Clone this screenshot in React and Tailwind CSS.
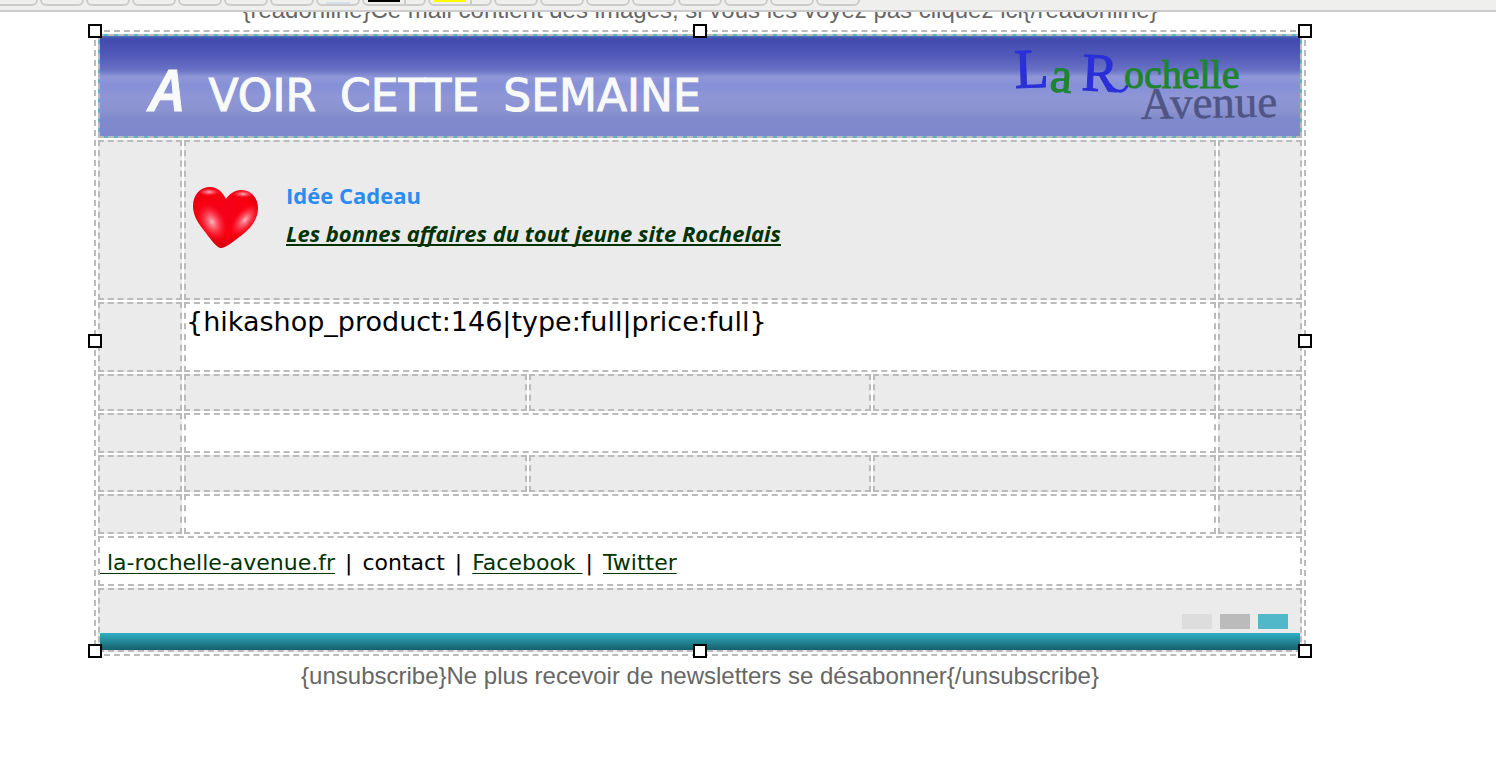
const toolbarButtons = ['bold', 'italic', 'underline', 'left', 'center', 'right', 'justify'];
const toolbarButtonsEnd = ['outdent', 'indent', 'link', 'unlink', 'anchor', 'image', 'table', 'source'];

const cell = 'border-2 border-dashed border-[#bbbbbb] p-0';
const grayCell = `${cell} bg-[#ebebeb]`;
const footerLink = 'text-[#003300] underline decoration-1 underline-offset-3';

function ToolbarButton({ label, children }) {
  return (
    <button
      type="button"
      aria-label={label}
      className="h-11 w-11 shrink-0 rounded-md border-2 border-[#cccccc] bg-[#efefed] flex items-end justify-center"
    >
      {children}
    </button>
  );
}

function ColorButton({ label, swatch }) {
  return (
    <div className="flex shrink-0 h-11 rounded-md border-2 border-[#cccccc] bg-[#efefed]">
      <button type="button" aria-label={label} className="w-10 px-1 pb-0.5 flex items-end">
        <span className={`block h-2 w-full ${swatch}`} />
      </button>
      <button type="button" aria-label={`${label} options`} className="w-5 border-l-2 border-[#cccccc]" />
    </div>
  );
}

// The editor is scrolled, only the bottom edge of the button row is visible
function Toolbar() {
  return (
    <header className="relative z-10 h-3 overflow-hidden border-b-2 border-[#cccccc] bg-[#efefed] flex items-end gap-0.5 pb-1">
      <div className="h-11 w-[38px] shrink-0 rounded-r-md border-2 border-l-0 border-[#cccccc]" />
      {toolbarButtons.map((name) => (
        <ToolbarButton key={name} label={name}>
          {name === 'justify' && <span className="block h-0.5 w-6 bg-[#d5e0ea]" />}
        </ToolbarButton>
      ))}
      <ColorButton label="Text color" swatch="bg-black" />
      <ColorButton label="Highlight color" swatch="bg-[#ffff00]" />
      {toolbarButtonsEnd.map((name) => (
        <ToolbarButton key={name} label={name} />
      ))}
    </header>
  );
}

function Logo() {
  return (
    <svg width="280" height="100" viewBox="0 -5 280 100" role="img" aria-label="La Rochelle Avenue" className="shrink-0 font-['Liberation_Serif',serif]">
      <g fill="#2a2fd8" stroke="#2a2fd8">
        <text x="3" y="47" fontSize="56" transform="rotate(-2 3 47)">L</text>
        <text x="69" y="49" fontSize="54" transform="rotate(3 69 49)">R</text>
        <path d="M98 44C103 52 112 52 115 45" fill="none" strokeWidth="3" strokeLinecap="round" />
      </g>
      <g fill="#1f8432" stroke="#1f8432">
        <text x="37" y="50" fontSize="50" transform="rotate(5 37 50)">a</text>
        <text x="112" y="47" fontSize="40">ochelle</text>
      </g>
      <text x="129" y="78" fontSize="45" fill="#4f5585" stroke="#4f5585" strokeWidth="0.5" transform="rotate(-1 129 78)">Avenue</text>
    </svg>
  );
}

function Heart() {
  return (
    <svg width="68" height="64" viewBox="0 0 68 64" aria-hidden="true" className="mt-2">
      <defs>
        <radialGradient id="heartBase" cx="0.5" cy="0.4" r="0.6">
          <stop offset="0" stopColor="#f5001c" />
          <stop offset="0.65" stopColor="#f8000f" />
          <stop offset="1" stopColor="#d40010" />
        </radialGradient>
        <radialGradient id="heartShine">
          <stop offset="0" stopColor="#ffb8c2" />
          <stop offset="1" stopColor="#ff3048" stopOpacity="0" />
        </radialGradient>
      </defs>
      <path
        d="M29 62C25 62 19 54 14 47C7 38 1 31 1 20C1 8 9 1 18 1C26 1 31 7 34 13C37 8 43 4 49 4C60 4 66 13 66 22C66 33 59 42 50 49C42 55 34 62 29 62Z"
        fill="url(#heartBase)"
      />
      <ellipse cx="20" cy="36" rx="13" ry="20" fill="url(#heartShine)" transform="rotate(-28 20 36)" />
      <ellipse cx="53" cy="34" rx="10" ry="19" fill="url(#heartShine)" transform="rotate(40 53 34)" />
      <ellipse cx="17" cy="6" rx="11" ry="4" fill="url(#heartShine)" />
      <ellipse cx="51" cy="8" rx="11" ry="4" fill="url(#heartShine)" />
    </svg>
  );
}

function Banner() {
  return (
    <div className="flex h-[100px] items-center justify-between bg-[linear-gradient(#4a74b8_0,#424bae_3px,#525aba_20px,#6972c4_34px,#8f97d8_41px,#8690d7_50px,#8f96d7_62px,#8a92cf_76px,#8089cb_82px,#7e87cb_100px)] pl-[50px] pr-2 text-[#f7faf8]">
      <h1 className="flex items-baseline gap-6 whitespace-nowrap pt-3 font-['Comic_Sans_MS','DejaVu_Sans',sans-serif] text-[44px] leading-[60px] [-webkit-text-stroke:1px_#f7faf8]">
        <span className="font-['Comic_Sans_MS','Open_Sans',sans-serif] text-[58px] font-semibold italic">A</span>
        <span>VOIR</span>
        <span>CETTE</span>
        <span>SEMAINE</span>
      </h1>
      <Logo />
    </div>
  );
}

function Handles() {
  const handle = 'absolute size-3.5 border-2 border-black bg-white -translate-x-1/2 -translate-y-1/2';
  return (
    <div className="pointer-events-none absolute inset-x-px top-px bottom-[5px]">
      <span className={`${handle} left-0 top-0`} />
      <span className={`${handle} left-1/2 top-0`} />
      <span className={`${handle} left-full top-0`} />
      <span className={`${handle} left-0 top-1/2`} />
      <span className={`${handle} left-full top-1/2`} />
      <span className={`${handle} left-0 top-full`} />
      <span className={`${handle} left-1/2 top-full`} />
      <span className={`${handle} left-full top-full`} />
    </div>
  );
}

function SplitRow() {
  return (
    <tr className="h-[37px]">
      <td className={grayCell} />
      <td className={grayCell} />
      <td className={grayCell} />
      <td className={grayCell} />
      <td className={grayCell} />
    </tr>
  );
}

function WideRow() {
  return (
    <tr className="h-10">
      <td className={grayCell} />
      <td className={cell} colSpan={3} />
      <td className={grayCell} />
    </tr>
  );
}

function Newsletter() {
  return (
    <table className="w-full table-fixed border-separate border-spacing-[2px] border-2 border-dashed border-[#bbbbbb] bg-white font-['Verdana','DejaVu_Sans',sans-serif] text-black">
      <colgroup>
        <col className="w-[84px]" />
        <col />
        <col />
        <col />
        <col className="w-[84px]" />
      </colgroup>
      <tbody>
        <tr>
          <td className={`${cell} bg-[#5fb4c2]`} colSpan={5}>
            <Banner />
          </td>
        </tr>
        <tr className="h-40">
          <td className={grayCell} />
          <td className={grayCell} colSpan={3}>
            <div className="flex items-center gap-[26px] pb-3 pl-1.5 font-['Comic_Sans_MS','Open_Sans',sans-serif] text-[22px] leading-[38px] font-bold">
              <Heart />
              <div className="whitespace-nowrap">
                <h2 className="text-[#2b8cf0]">Idée Cadeau</h2>
                <p>
                  <a href="#" className="text-[#003300] italic underline decoration-2 underline-offset-2 [text-decoration-skip-ink:none]">
                    Les bonnes affaires du tout jeune site Rochelais
                  </a>
                </p>
              </div>
            </div>
          </td>
          <td className={grayCell} />
        </tr>
        <tr className="h-[70px]">
          <td className={grayCell} />
          <td className={`${cell} align-top text-[27px] leading-9`} colSpan={3}>
            {'{hikashop_product:146|type:full|price:full}'}
          </td>
          <td className={grayCell} />
        </tr>
        <SplitRow />
        <WideRow />
        <SplitRow />
        <WideRow />
        <tr className="h-[50px]">
          <td className={`${cell} whitespace-pre pt-1 text-[22px] leading-7`} colSpan={5}>
            <a href="#" className={footerLink}> la-rochelle-avenue.fr</a>
            <span className="px-[3px]"> | </span>
            contact
            <span className="px-[3px]"> | </span>
            <a href="#" className={footerLink}>Facebook </a>
            <span className="px-[3px]">| </span>
            <a href="#" className={footerLink}>Twitter</a>
          </td>
        </tr>
        <tr>
          <td className={grayCell} colSpan={5}>
            <div className="flex h-[43px] items-end justify-end gap-2 pr-3 pb-1">
              <span className="h-[15px] w-[30px] bg-[#dddddd]" />
              <span className="h-[15px] w-[30px] bg-[#bbbbbb]" />
              <span className="h-[15px] w-[30px] bg-[#50b8c8]" />
            </div>
            <div className="h-[17px] bg-linear-to-b from-[#2fb0c6] to-[#17606c]" />
          </td>
        </tr>
      </tbody>
    </table>
  );
}

export default function App() {
  return (
    <div className="min-h-screen bg-white font-['Liberation_Sans',Arial,sans-serif] text-[#666666]">
      <Toolbar />
      <main className="pr-24">
        <p className="-mt-4 mb-1.5 h-7 text-center text-2xl leading-7">
          {'{readonline}Ce mail contient des images, si vous les voyez pas cliquez ici{/readonline}'}
        </p>
        <div className="relative mx-auto w-full max-w-[1212px]">
          <Newsletter />
          <Handles />
        </div>
        <p className="mt-1.5 text-center text-2xl leading-7">
          {'{unsubscribe}Ne plus recevoir de newsletters se désabonner{/unsubscribe}'}
        </p>
      </main>
    </div>
  );
}
